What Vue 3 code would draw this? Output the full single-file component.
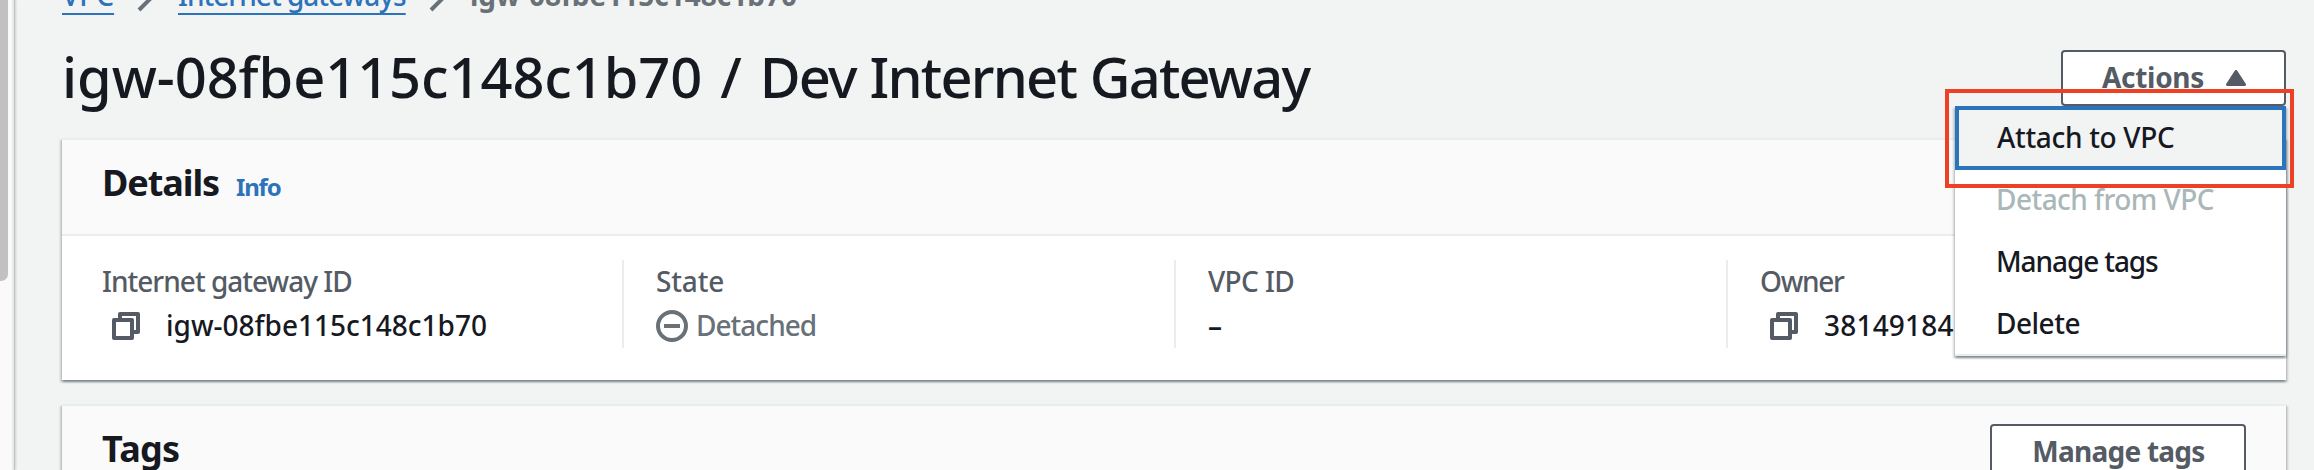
<script setup>
const menuItems = [
  { label: 'Attach to VPC', cls: 'focused' },
  { label: 'Detach from VPC', cls: 'disabled' },
  { label: 'Manage tags', cls: 'manage' },
  { label: 'Delete', cls: 'delete' },
]
</script>

<template>
  <div class="page">
    <aside class="rail"><div class="thumb"></div></aside>
    <main class="main">
      <nav class="crumbs">
        <div class="crumb-list">
          <a class="crumb">VPC</a>
          <svg class="chev" width="20" height="30" viewBox="0 0 20 30"><path d="M3 2 L16 15 L3 28" /></svg>
          <a class="crumb gateways">Internet gateways</a>
          <svg class="chev" width="20" height="30" viewBox="0 0 20 30"><path d="M3 2 L16 15 L3 28" /></svg>
          <span class="current">igw-08fbe115c148c1b70</span>
        </div>
      </nav>

      <header class="title-row">
        <h1><span class="title-id">igw-08fbe115c148c1b70 / </span><span class="title-name">Dev Internet Gateway</span></h1>
        <div class="actions">
          <button class="btn actions-btn">
            <span>Actions</span>
            <svg width="20" height="16" viewBox="0 0 20 16"><path d="M10 1.5 L18.5 14.5 H1.5 Z" /></svg>
          </button>
          <ul class="menu">
            <li v-for="item in menuItems" :key="item.label" :class="item.cls">{{ item.label }}</li>
          </ul>
          <div class="highlight"></div>
        </div>
      </header>

      <section class="card">
        <div class="card-head">
          <h2 class="details">Details</h2>
          <a class="info">Info</a>
        </div>
        <div class="columns">
          <div class="col">
            <div class="label gateway-label">Internet gateway ID</div>
            <div class="value">
              <svg class="copy" width="28" height="28" viewBox="0 0 28 28"><path d="M8 6 V2 H26 V20 H22" /><rect x="2" y="8" width="18" height="18" /></svg>
              <span>igw-08fbe115c148c1b70</span>
            </div>
          </div>
          <div class="col">
            <div class="label">State</div>
            <div class="value state">
              <svg class="minus" width="32" height="32" viewBox="0 0 32 32"><circle cx="16" cy="16" r="14" /><path d="M8 16 H24" /></svg>
              <span>Detached</span>
            </div>
          </div>
          <div class="col">
            <div class="label vpc-label">VPC ID</div>
            <div class="value dash">–</div>
          </div>
          <div class="col">
            <div class="label owner-label">Owner</div>
            <div class="value">
              <svg class="copy" width="28" height="28" viewBox="0 0 28 28"><path d="M8 6 V2 H26 V20 H22" /><rect x="2" y="8" width="18" height="18" /></svg>
              <span class="owner-id">38149184</span>
            </div>
          </div>
        </div>
      </section>

      <section class="card">
        <div class="card-head">
          <h2 class="tags">Tags</h2>
          <button class="btn tags-btn">Manage tags</button>
        </div>
      </section>
    </main>
  </div>
</template>

<style>
body { background: #f2f3f3; overflow: hidden; }
</style>

<style scoped>
.page {
  display: flex;
  width: 2314px;
  height: 470px;
  overflow: hidden;
  background: #f2f3f3;
  color: #16191f;
  font: 500 28px/44px "Noto Sans", "Open Sans", sans-serif;
  white-space: nowrap;
}
.page * { box-sizing: border-box; }
h1, h2, ul { margin: 0; padding: 0; }
svg { flex: none; display: block; }

.rail {
  flex: none;
  width: 15px;
  background: #fafafa;
  border-right: 1px solid #bdc3c7;
  box-shadow: inset -2px 0 0 #e8e9e9, 1px 0 2px rgba(0, 28, 36, 0.15);
}
.thumb { width: 8px; height: 281px; background: #c1c1c1; border-radius: 0 0 7px 0; }
.main { flex: none; width: 2271px; padding-left: 47px; box-sizing: border-box; }

.crumbs { height: 50px; overflow: hidden; }
.crumb-list { display: flex; gap: 22px; margin-top: -27px; height: 44px; }
.crumb {
  color: #2b73bb;
  width: 52px;
  text-decoration: underline;
  text-decoration-thickness: 2px;
  text-underline-offset: 7px;
  text-decoration-skip-ink: none;
}
.crumb.gateways { width: 228px; letter-spacing: -0.98px; }
.chev { margin-top: 9px; fill: none; stroke: #687078; stroke-width: 4; }
.current { color: #687078; font-weight: 700; }

.title-row { display: flex; justify-content: space-between; height: 56px; margin-bottom: 32px; }
h1 { font-size: 56px; font-weight: 500; line-height: 53px; white-space: pre; }
.title-id { letter-spacing: -0.08px; word-spacing: 3.5px; }
.title-name { letter-spacing: -1.8px; word-spacing: 1px; }

.btn {
  display: block;
  height: 56px;
  border: 2px solid #545b64;
  border-radius: 4px;
  background: #fff;
  color: #545b64;
  font: 700 28px/50px "Noto Sans", "Open Sans", sans-serif;
  padding: 0 38px 2px 39px;
}
.actions { position: relative; width: 225px; }
.actions-btn { display: flex; width: 225px; justify-content: space-between; align-items: flex-start; letter-spacing: -0.3px; }
.actions-btn svg { margin-top: 18px; fill: #545b64; stroke: #545b64; stroke-width: 3; stroke-linejoin: round; }

.menu {
  position: absolute;
  top: 56px;
  right: 0;
  z-index: 2;
  width: 331px;
  height: 250px;
  list-style: none;
  background: #fff;
  border-bottom: 2px solid #eaeded;
  box-shadow: 0 2px 2px rgba(0, 28, 36, 0.3), 2px 2px 2px rgba(0, 28, 36, 0.15), -2px 2px 2px rgba(0, 28, 36, 0.15);
}
.menu li { height: 62px; line-height: 58px; padding-left: 41px; }
.menu .focused {
  height: 64px;
  line-height: 54px;
  padding-left: 38px;
  border: 4px solid #2b73bb;
  background: #f2f3f3;
  letter-spacing: -0.32px;
}
.menu .disabled { color: #aab7b8; letter-spacing: -0.54px; }
.menu .manage { letter-spacing: -1.1px; }
.menu .delete { letter-spacing: -0.5px; }
.highlight {
  position: absolute;
  z-index: 3;
  top: 39px;
  right: -8px;
  width: 349px;
  height: 99px;
  border: 4px solid #ee4024;
}

.card {
  margin-bottom: 24px;
  border-top: 2px solid #eaeded;
  background: #fff;
  box-shadow: 0 2px 2px rgba(0, 28, 36, 0.3), 2px 2px 2px rgba(0, 28, 36, 0.15), -2px 2px 2px rgba(0, 28, 36, 0.15);
}
.card-head {
  display: flex;
  align-items: baseline;
  height: 96px;
  padding: 0 40px;
  background: #fafafa;
  border-bottom: 2px solid #eaeded;
}
h2 { font-size: 36px; font-weight: 700; line-height: 86px; }
.details { letter-spacing: -1.08px; }
.tags { letter-spacing: -0.7px; }
.info { margin-left: 17px; font-size: 24px; font-weight: 700; color: #2b73bb; letter-spacing: -1.2px; }
.tags-btn { align-self: flex-start; margin: 18px 0 0 auto; width: 256px; letter-spacing: -0.75px; }

.columns { display: grid; grid-template-columns: repeat(4, 552px); padding: 24px 0 32px 8px; }
.col { height: 88px; padding-left: 32px; }
.col + .col { border-left: 2px solid #eaeded; }
.label { height: 42px; line-height: 42px; color: #545b64; letter-spacing: -0.15px; }
.gateway-label { letter-spacing: -0.98px; }
.vpc-label { letter-spacing: -0.6px; }
.owner-label { letter-spacing: -1.3px; }
.value { display: flex; align-items: flex-start; height: 46px; line-height: 46px; }
.dash { font-weight: 600; }
.owner-id { letter-spacing: 0.2px; }
.copy { margin: 10px 26px 0 10px; fill: none; stroke: #545b64; stroke-width: 4; stroke-linejoin: round; }
.state { color: #687078; letter-spacing: -0.98px; }
.minus { margin: 8px 8px 0 0; fill: none; stroke: #687078; stroke-width: 4; }
</style>
